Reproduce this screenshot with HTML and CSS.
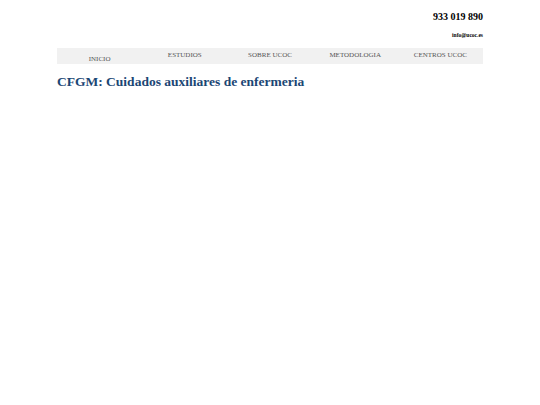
FILE: index.html
```html
<!DOCTYPE html>
<html>
<head>
<meta charset="utf-8">
<link rel="stylesheet" href="styles.css">
</head>
<body>
<div class="page">
  <header class="top">
    <div class="phone">933 019 890</div>
    <div class="mail">info@ucoc.es</div>
  </header>
  <nav class="nav">
    <a class="nav-item first">INICIO</a>
    <a class="nav-item">ESTUDIOS</a>
    <a class="nav-item">SOBRE UCOC</a>
    <a class="nav-item">METODOLOGIA</a>
    <a class="nav-item">CENTROS UCOC</a>
  </nav>
  <h1 class="title">CFGM: Cuidados auxiliares de enfermeria</h1>
</div>
</body>
</html>
```

FILE: styles.css
```css
html, body {
  margin: 0;
  padding: 0;
  background: #ffffff;
}
body {
  font-family: "Liberation Serif", "Times New Roman", serif;
  color: #000;
}
.page {
  width: 426px;
  margin-left: 57px;
}
.top {
  display: flex;
  flex-direction: column;
  align-items: flex-end;
  padding-top: 10px;
}
.phone {
  font-weight: bold;
  font-size: 10px;
  line-height: 14px;
}
.mail {
  font-weight: bold;
  font-size: 5.5px;
  line-height: 8px;
  margin-top: 7px;
}
.nav {
  display: grid;
  grid-template-columns: repeat(5, 1fr);
  background: #f1f1f1;
  height: 16px;
  margin-top: 9px;
}
.nav-item {
  font-size: 7px;
  line-height: 8px;
  color: #555555;
  text-align: center;
  padding-top: 3px;
}
.nav-item.first {
  padding-top: 7px;
}
.title {
  margin: 9px 0 0 0;
  font-size: 13.5px;
  line-height: 18px;
  font-weight: bold;
  color: #1b4674;
}
```
